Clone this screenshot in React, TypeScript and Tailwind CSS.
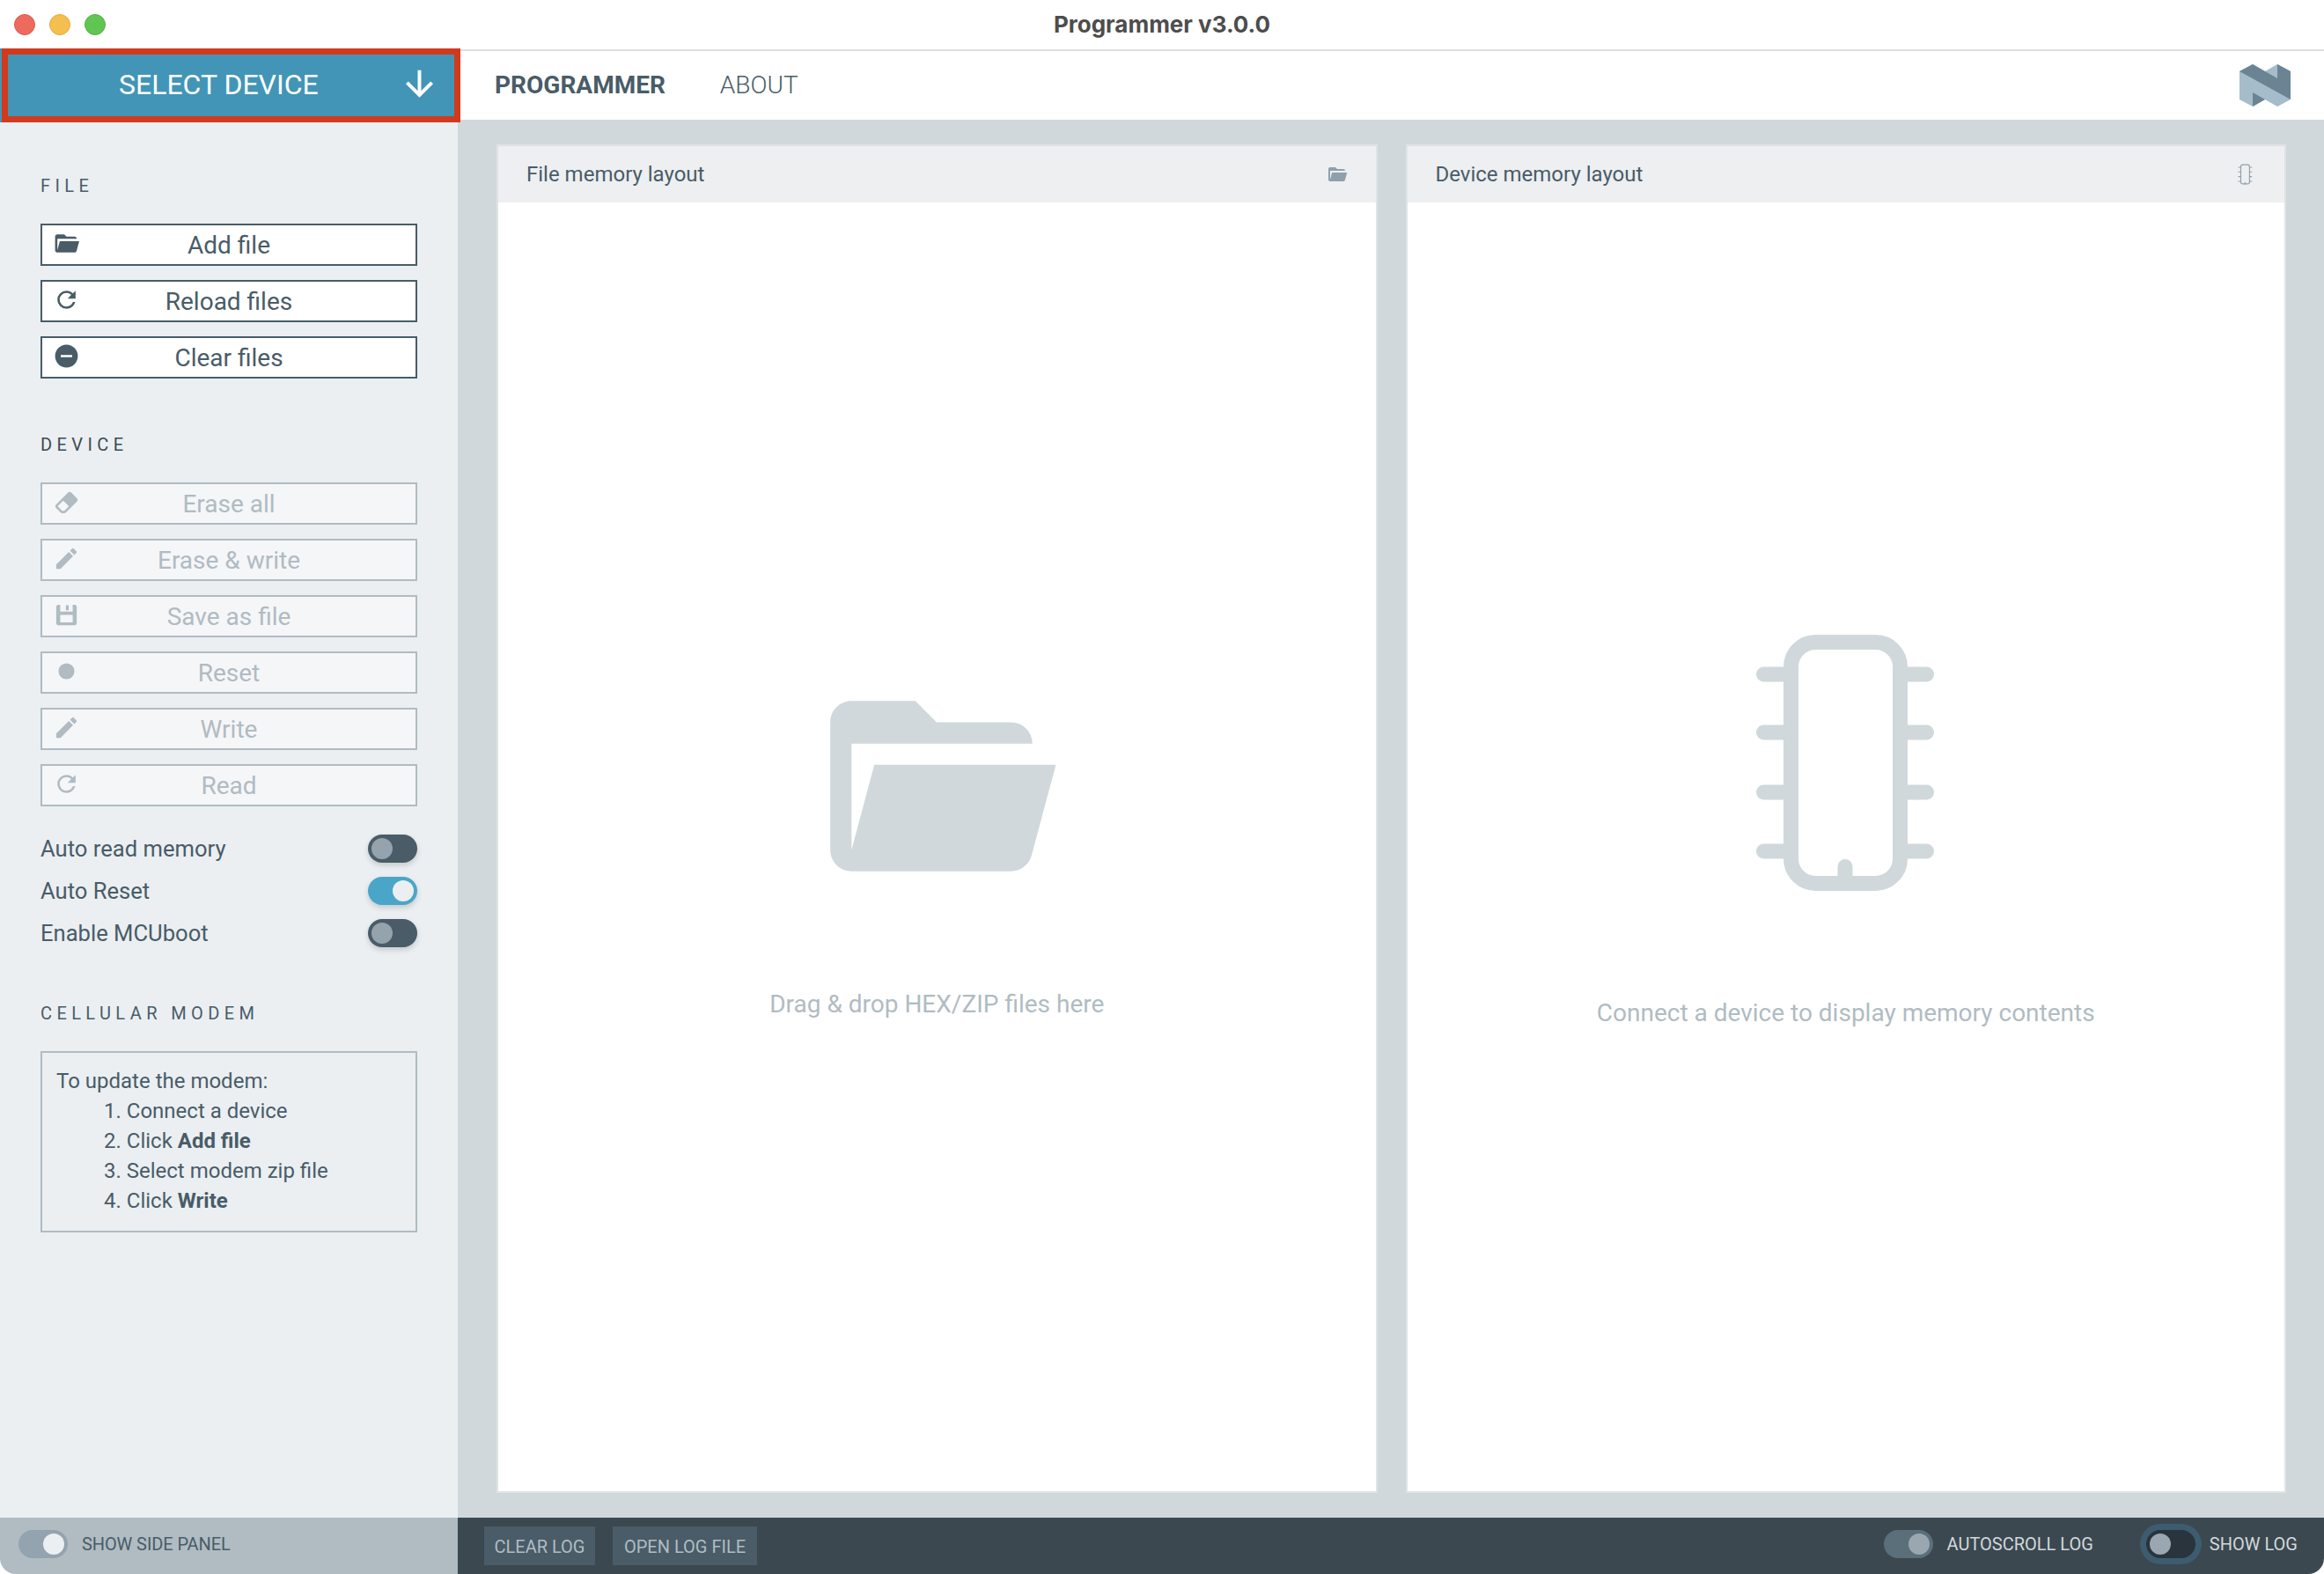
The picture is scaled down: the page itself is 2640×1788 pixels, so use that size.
const MDI = {
  folderOpen: "M19,20H4C2.89,20 2,19.1 2,18V6C2,4.89 2.89,4 4,4H10L12,6H19A2,2 0 0,1 21,8H21L4,8V18L6.14,10H23.21L20.93,18.5C20.7,19.37 19.92,20 19,20Z",
  refresh: "M17.65,6.35C16.2,4.9 14.21,4 12,4A8,8 0 0,0 4,12A8,8 0 0,0 12,20C15.73,20 18.84,17.45 19.73,14H17.65C16.83,16.33 14.61,18 12,18A6,6 0 0,1 6,12A6,6 0 0,1 12,6C13.66,6 15.14,6.69 16.22,7.78L13,11H20V4L17.65,6.35Z",
  minusCircle: "M17,13H7V11H17M12,2A10,10 0 0,0 2,12A10,10 0 0,0 12,22A10,10 0 0,0 22,12A10,10 0 0,0 12,2Z",
  eraser: "M16.24,3.56L21.19,8.5C21.97,9.29 21.97,10.55 21.19,11.34L12,20.53C10.44,22.09 7.91,22.09 6.34,20.53L2.81,17C2.03,16.21 2.03,14.95 2.81,14.16L13.41,3.56C14.2,2.78 15.46,2.78 16.24,3.56M4.22,15.58L7.76,19.11C8.54,19.9 9.8,19.9 10.59,19.11L14.12,15.58L9.17,10.63L4.22,15.58Z",
  pencil: "M20.71,7.04C21.1,6.65 21.1,6 20.71,5.63L18.37,3.29C18,2.9 17.35,2.9 16.96,3.29L15.12,5.12L18.87,8.87M3,17.25V21H6.75L17.81,9.93L14.06,6.18L3,17.25Z",
  save: "M5,3H19A2,2 0 0,1 21,5V19A2,2 0 0,1 19,21H5A2,2 0 0,1 3,19V5A2,2 0 0,1 5,3M6.5,3V9H17.5V3H6.5M11.5,3.5H14V8H11.5V3.5M6.5,12V18.5H17.5V12H6.5Z",
  circle: "M12,5A7,7 0 0,0 5,12A7,7 0 0,0 12,19A7,7 0 0,0 19,12A7,7 0 0,0 12,5Z",
  arrowDown: "M11,4H13V16L18.5,10.5L19.92,11.92L12,19.84L4.08,11.92L5.5,10.5L11,16V4Z",
};

function Icon({ d, className }: { d: string; className: string }) {
  return (
    <svg viewBox="0 0 24 24" fill="currentColor" fillRule="evenodd" className={className}>
      <path d={d} />
    </svg>
  );
}

function Chip({ className, stroke }: { className: string; stroke: number }) {
  const pins = [50, 116, 184, 251];
  return (
    <svg viewBox="1 0 212 301" fill="none" stroke="currentColor" strokeWidth={stroke} strokeLinecap="round" className={className}>
      <rect x="44.5" y="13.5" width="124" height="274" rx="28" />
      {pins.map((y) => (
        <g key={y}>
          <path d={`M13.5 ${y}H44.5`} />
          <path d={`M168.5 ${y}H198.5`} />
        </g>
      ))}
      <path d="M106 268.5V287.5" />
    </svg>
  );
}

function Logo() {
  return (
    <svg viewBox="0 0 58 48" className="w-[58px] h-[48px] shrink-0">
      <path d="M0 8L15 0L29 8L43 0L58 8V40L43 48L29 40L15 48L0 40Z" fill="#a5bccb" />
      <path d="M0 8L15 0L43 16V0L58 8V40Z" fill="#6b8494" />
      <path d="M15 32L29 40L15 48Z" fill="#6b8494" />
    </svg>
  );
}

function SectionTitle({ children, className = "" }: { children: string; className?: string }) {
  return <p className={"text-[20px] leading-[24px] tracking-[5.4px] " + className}>{children}</p>;
}

function SideButton({ label, icon, disabled }: { label: string; icon: string; disabled?: boolean }) {
  const cls = disabled
    ? "bg-[#f5f6f8] border-[#b0bbc2] text-[#b0bbc2]"
    : "bg-white border-[#495c68] text-[#495c68]";
  return (
    <button className={"relative w-full h-[48px] border-2 text-[28px] leading-[46px] text-center " + cls}>
      <Icon d={icon} className="absolute left-[12px] top-[5px] w-[31px] h-[31px]" />
      {label}
    </button>
  );
}

type ToggleProps = { track: string; knob: string; on?: boolean; extra?: string };

function Toggle({ track, knob, on, extra = "" }: ToggleProps) {
  return (
    <div className={"w-[56px] h-[32px] shrink-0 rounded-full p-[4px] flex " + (on ? "justify-end " : "justify-start ") + track + " " + extra}>
      <div className={"w-[24px] h-[24px] rounded-full " + knob} />
    </div>
  );
}

function OptionRow({ label, on }: { label: string; on?: boolean }) {
  return (
    <div className="flex items-center justify-between h-[32px] text-[25.6px] text-[#495c68]">
      <span>{label}</span>
      <Toggle
        on={on}
        track={on ? "bg-[#4aa6c9]" : "bg-[#495c68]"}
        knob={on ? "bg-[#eceff1]" : "bg-[#94a3ae]"}
        extra="shadow-[0_3px_6px_rgba(0,0,0,0.16)]"
      />
    </div>
  );
}

function Panel({ title, icon, children }: { title: string; icon: React.ReactNode; children: React.ReactNode }) {
  return (
    <div className="flex-1 flex flex-col border-2 border-[#dfe3e6] bg-white">
      <div className="h-[64px] shrink-0 bg-[#edeff1] flex items-center justify-between pl-[32px] pr-[32px] text-[24px] text-[#495c68]">
        <span>{title}</span>
        {icon}
      </div>
      <div className="flex-1 flex flex-col items-center justify-center">{children}</div>
    </div>
  );
}

const fileButtons = [
  { label: "Add file", icon: MDI.folderOpen },
  { label: "Reload files", icon: MDI.refresh },
  { label: "Clear files", icon: MDI.minusCircle },
];

const deviceButtons = [
  { label: "Erase all", icon: MDI.eraser },
  { label: "Erase & write", icon: MDI.pencil },
  { label: "Save as file", icon: MDI.save },
  { label: "Reset", icon: MDI.circle },
  { label: "Write", icon: MDI.pencil },
  { label: "Read", icon: MDI.refresh },
];

export default function App() {
  return (
    <div className="w-[2640px] h-[1788px] flex flex-col overflow-hidden rounded-b-[18px] bg-white [font-family:Roboto,sans-serif]">
      {/* window title bar */}
      <div className="h-[58px] shrink-0 border-b-2 border-[#dedede] grid grid-cols-[1fr_auto_1fr] items-center">
        <div className="flex items-center gap-[16px] pl-[16px]">
          <span className="w-[24px] h-[24px] rounded-full bg-[#ed6a5e] border border-[#e0584c]" />
          <span className="w-[24px] h-[24px] rounded-full bg-[#f5bf4f] border border-[#e3ab3a]" />
          <span className="w-[24px] h-[24px] rounded-full bg-[#61c554] border border-[#52b145]" />
        </div>
        <span className="pb-[2px] text-[26px] font-bold text-[#4d4d4d] [font-family:Inter,sans-serif]">Programmer v3.0.0</span>
        <div />
      </div>

      {/* nav */}
      <div className="h-[78px] shrink-0 flex items-center">
        <button className="relative z-10 ml-[2px] w-[521px] h-[84px] -my-[3px] shrink-0 flex items-center justify-between bg-[#4295b6] border-[7px] border-[#d13a1d] shadow-[-2px_0_0_#4295b6] pl-[126px] pr-[16px] pb-[3px] text-[32px] text-white">
          <span>SELECT DEVICE</span>
          <Icon d={MDI.arrowDown} className="w-[47px] h-[47px]" />
        </button>
        <span className="ml-[39px] text-[28px] font-bold text-[#495c68]">PROGRAMMER</span>
        <span className="ml-[62px] text-[28px] font-light text-[#495c68]">ABOUT</span>
        <div className="flex-1" />
        <div className="mr-[38px]">
          <Logo />
        </div>
      </div>

      {/* body */}
      <div className="flex-1 flex min-h-0">
        <aside className="w-[520px] shrink-0 bg-[#ebeff2] px-[46px] pt-[63px]">
          <SectionTitle className="text-[#495c68]">FILE</SectionTitle>
          <div className="mt-[31px] flex flex-col gap-[16px]">
            {fileButtons.map((b) => (
              <SideButton key={b.label} label={b.label} icon={b.icon} />
            ))}
          </div>

          <SectionTitle className="mt-[63px] text-[#3c4a54]">DEVICE</SectionTitle>
          <div className="mt-[31px] flex flex-col gap-[16px]">
            {deviceButtons.map((b) => (
              <SideButton key={b.label} label={b.label} icon={b.icon} disabled />
            ))}
          </div>

          <div className="mt-[32px] flex flex-col gap-[16px]">
            <OptionRow label="Auto read memory" />
            <OptionRow label="Auto Reset" on />
            <OptionRow label="Enable MCUboot" />
          </div>

          <SectionTitle className="mt-[63px] text-[#495c68]">CELLULAR MODEM</SectionTitle>
          <div className="mt-[31px] border-2 border-[#b0bbc2] pt-[15px] pb-[17px] pl-[16px] text-[24px] leading-[34px] text-[#495c68]">
            <p>To update the modem:</p>
            <ol className="pl-[54px]">
              <li>1. Connect a device</li>
              <li>2. Click <b>Add file</b></li>
              <li>3. Select modem zip file</li>
              <li>4. Click <b>Write</b></li>
            </ol>
          </div>
        </aside>

        <main className="flex-1 flex gap-[32px] bg-[#d0d8db] pl-[44px] pr-[43px] py-[28px]">
          <Panel title="File memory layout" icon={<Icon d={MDI.folderOpen} className="w-[24px] h-[24px] text-[#8fa0ad]" />}>
            <div className="flex flex-col items-center pb-[19px]">
              <Icon d={MDI.folderOpen} className="w-[290px] h-[290px] text-[#d0d8db]" />
              <p className="mt-[87px] text-[28px] leading-[32px] text-[#b0bcc2]">Drag &amp; drop HEX/ZIP files here</p>
            </div>
          </Panel>
          <Panel title="Device memory layout" icon={<Chip stroke={14} className="mr-[4px] w-[17px] h-[24px] text-[#8fa0ad]" />}>
            <div className="flex flex-col items-center pb-[41px]">
              <Chip stroke={17} className="w-[212px] h-[301px] text-[#d0d8db]" />
              <p className="mt-[118px] text-[28px] leading-[32px] text-[#b0bcc2]">Connect a device to display memory contents</p>
            </div>
          </Panel>
        </main>
      </div>

      {/* log bar */}
      <div className="h-[64px] shrink-0 flex text-[20px]">
        <div className="w-[520px] shrink-0 bg-[#b0bcc2] flex items-center gap-[16px] pl-[21px] pb-[4px] text-[#495c68]">
          <Toggle on track="bg-[#93a3af]" knob="bg-[#eceff1]" />
          <span className="tracking-[-0.1px]">SHOW SIDE PANEL</span>
        </div>
        <div className="flex-1 bg-[#3b4850] flex items-center pl-[30px] pr-[30px]">
          <button className="w-[126px] h-[44px] pt-[1px] bg-[#495c68] text-[#b0bcc2]">CLEAR LOG</button>
          <button className="ml-[20px] w-[164px] h-[44px] pt-[1px] bg-[#495c68] text-[#b0bcc2]">OPEN LOG FILE</button>
          <div className="flex-1" />
          <div className="flex items-center pb-[4px] text-[#d0d8db]">
            <Toggle on track="bg-[#5b6f7a]" knob="bg-[#9aa7b1]" />
            <span className="ml-[16px]">AUTOSCROLL LOG</span>
            <Toggle track="bg-[#2a343c]" knob="bg-[#9aa7b1]" extra="ml-[60px] shadow-[0_0_0_7px_#3d5c6f]" />
            <span className="ml-[16px]">SHOW LOG</span>
          </div>
        </div>
      </div>
    </div>
  );
}
